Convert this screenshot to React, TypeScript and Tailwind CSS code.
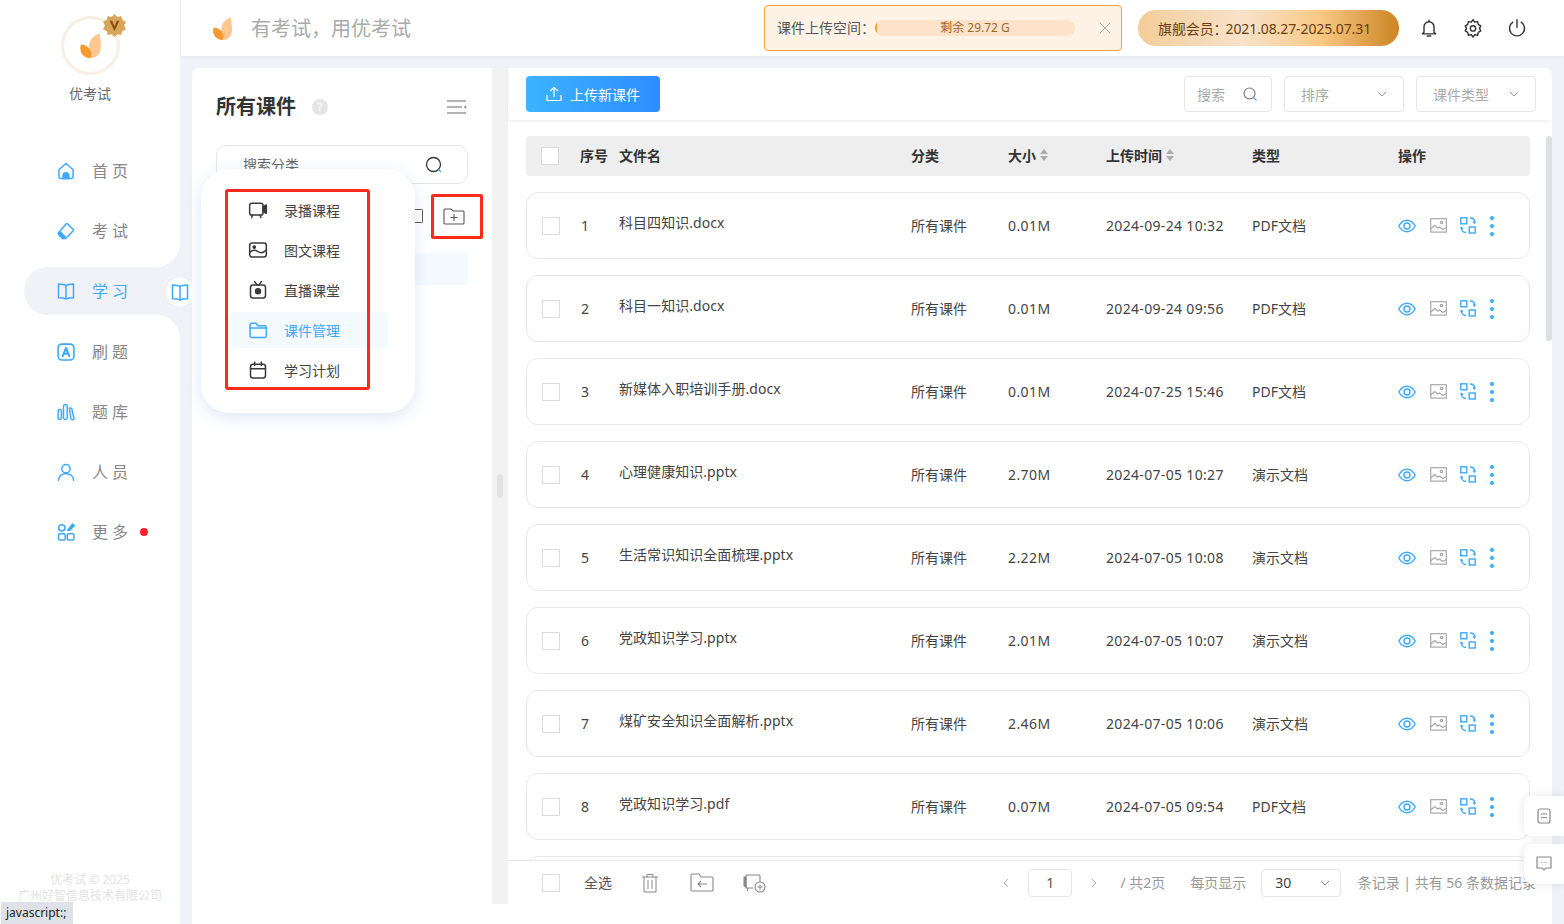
import React from 'react';

const B = '#3ca9ff';
const Leaf = ({ className }: { className?: string }) => (
  <svg viewBox="0 0 20 24" className={className}>
    <path d="M18.5 .5C19.500 4 20 8 20 13C20 19.500 16.500 24 11 24C9 24 7.500 23.500 6.500 22.500C9 20 8 13 9.500 8.500C11 4.500 14.500 1.500 18.500 .5Z" fill="#fdc78f" />
    <path d="M.8 11C5 11 9.500 14 10.800 19C11.200 21 10.800 23 9.500 24C5 24 1 21 .3 16C.1 14 .3 12.500 .8 11Z" fill="#f7992e" />
  </svg>
);

const S = ({ children, size = 20, color = B, w = 1.6, className }: any) => (
  <svg width={size} height={size} viewBox="0 0 24 24" fill="none" stroke={color} strokeWidth={w} strokeLinecap="round" strokeLinejoin="round" className={className}>
    {children}
  </svg>
);

const IHome = () => <S w={1.8}><path d="M3.500 10.500L12 3l8.500 7.500V19a2 2 0 0 1-2 2h-13a2 2 0 0 1-2-2z" /><path d="M8.500 21v-3.500a3.500 3.500 0 0 1 7 0V21z" fill={B} /></S>;
const IEraser = () => <S w={1.8}><path d="M14 3.500l6.500 6.500a1.500 1.500 0 0 1 0 2L11.500 21H7.500L3 16a1.500 1.500 0 0 1 0-2l9-10.500a1.400 1.400 0 0 1 2 0z" /><path d="M3 15l6 6 2-2-6-6z" fill={B} /></S>;
const IBook = ({ size = 20 }: any) => <S size={size} w={1.8}><path d="M12 5.500C10 4 7 3.500 3 3.500V20c4 0 7 .5 9 1.500 2-1 5-1.500 9-1.500V3.500c-4 0-7 .5-9 2z" /><path d="M12 5.500v16" /></S>;
const IA = () => <S w={1.9}><rect x="2.500" y="2.500" width="19" height="19" rx="4.500" /><path d="M8 17l4-10 4 10M9.300 14h5.400" strokeWidth="2.400" /></S>;
const IBars = () => <S w={1.8}><rect x="2.500" y="9" width="4" height="12" rx="2" /><rect x="9" y="3" width="4.500" height="18" rx="2" /><path d="M16 7.500c2.500-1 3 0 3.500 3L21.500 19.500c.3 2-3 2.500-3.500.5z" /></S>;
const IUser = () => <S w={1.8}><circle cx="12" cy="8" r="5" /><path d="M3 22c0-5 4-8 9-8s9 3 9 8" /></S>;
const IMore = () => <S w={1.8}><circle cx="7" cy="7" r="3.800" /><rect x="3" y="14" width="8" height="7.500" rx="1.500" /><rect x="13.500" y="14" width="8" height="7.500" rx="1.500" /><path d="M14 10l6-7.500 2 2L16 10z" fill={B} /></S>;

const dk = '#3a3a3a';
const IVideo = () => <S color={dk} w={1.8}><rect x="2" y="4" width="16" height="14" rx="2.500" /><path d="M18 8l4-2v10l-4-2z" fill={dk} /><path d="M5.500 18L4.500 21M14.500 18l1 3" /></S>;
const IPic = () => <S color={dk} w={1.8}><rect x="2" y="3.500" width="20" height="17" rx="3" /><circle cx="7.500" cy="8.500" r="1.400" fill={dk} /><path d="M2 15c4-4 7-3 10-1s6 2 10-2" /></S>;
const ITv = () => <S color={dk} w={1.8}><rect x="3" y="6" width="18" height="15.500" rx="3" /><path d="M8 2l3 4M16 2l-3 4" /><circle cx="12" cy="13.500" r="3" fill={dk} /></S>;
const IFolder = () => <S w={1.8}><path d="M2.500 19V5.500a1.500 1.500 0 0 1 1.500-1.500h5.500l2.500 3h8a2 2 0 0 1 2 2V19a2 2 0 0 1-2 2H4.500a2 2 0 0 1-2-2z" /><path d="M2.500 9.500h19" /></S>;
const ICal = () => <S color={dk} w={1.8}><rect x="3" y="5" width="18" height="16.500" rx="3" /><path d="M3 10.500h18M8 2.500v4M16 2.500v4" /></S>;

const Check = ({ className }: { className?: string }) => <div className={`w-[18px] h-[18px] border border-[#dcdcdc] bg-white ${className ?? ''}`} />;

const Eye = () => <svg width="18" height="14" viewBox="0 0 18 14" fill="none" stroke={B} strokeWidth="1.400"><path d="M.8 7C3 3 6 1.200 9 1.200S15 3 17.200 7C15 11 12 12.800 9 12.800S3 11 .8 7z" /><circle cx="9" cy="7" r="3" /></svg>;
const Img = () => <svg width="17" height="15" viewBox="0 0 17 15" fill="none" stroke="#a8a8a8" strokeWidth="1.200"><rect x=".7" y=".7" width="15.600" height="13.400" /><circle cx="11.500" cy="4.500" r="1.200" /><path d="M.7 11l4-3.500 3 2.500 2-1 3 2.500 3.600-2" /></svg>;
const Conv = () => <svg width="16" height="17" viewBox="0 0 16 17" fill="none" stroke={B} strokeWidth="1.400"><rect x=".8" y=".8" width="6" height="6" /><rect x="9.200" y="10" width="6" height="6" /><path d="M10 1c3 0 5 2 5 5M13.200 4.500L15 6.400M1 10c0 3 2 5.500 5 5.500M2.800 12L1 10" /></svg>;
const Dots = () => <div className="flex flex-col gap-[4px] items-center w-[4px]">{[0,1,2].map(i => <div key={i} className="w-[4px] h-[4px] rounded-full bg-[#3ca9ff]" />)}</div>;

const Sort = () => <span className="inline-flex flex-col gap-[2px] ml-[4px]"><span className="w-0 h-0 border-x-[4px] border-x-transparent border-b-[5px] border-b-[#aaa]" /><span className="w-0 h-0 border-x-[4px] border-x-transparent border-t-[5px] border-t-[#aaa]" /></span>;

const nums = 'font-["Noto_Sans","Noto_Sans_CJK_SC",sans-serif]';
const headCols = 'grid grid-cols-[54px_39px_292px_97px_98px_146px_146px_1fr] items-center';
const rowCols = 'grid grid-cols-[54px_38px_292px_97px_98px_146px_147px_1fr] items-center';

const rows = [
  ['1', '科目四知识.docx', '0.01M', '2024-09-24 10:32', 'PDF文档'],
  ['2', '科目一知识.docx', '0.01M', '2024-09-24 09:56', 'PDF文档'],
  ['3', '新媒体入职培训手册.docx', '0.01M', '2024-07-25 15:46', 'PDF文档'],
  ['4', '心理健康知识.pptx', '2.70M', '2024-07-05 10:27', '演示文档'],
  ['5', '生活常识知识全面梳理.pptx', '2.22M', '2024-07-05 10:08', '演示文档'],
  ['6', '党政知识学习.pptx', '2.01M', '2024-07-05 10:07', '演示文档'],
  ['7', '煤矿安全知识全面解析.pptx', '2.46M', '2024-07-05 10:06', '演示文档'],
  ['8', '党政知识学习.pdf', '0.07M', '2024-07-05 09:54', 'PDF文档'],
];

const Nav = ({ icon, label, dot }: any) => (
  <div className="h-[60px] flex items-center pl-[56px]">
    {icon}
    <span className="ml-[16px] text-[16px] tracking-[4px] text-[#888]">{label}</span>
    {dot && <span className="ml-[8px] w-[8px] h-[8px] rounded-full bg-[#ff1f2d]" />}
  </div>
);

const MenuItem = ({ icon, label, active }: any) => (
  <div className={`h-[36px] mb-[4px] flex items-center pl-[19px] rounded ${active ? 'bg-[#f5faff]' : ''}`}>
    {icon}
    <span className={`ml-[16px] text-[14px] ${active ? 'text-[#3ca9ff]' : 'text-[#444]'}`}>{label}</span>
  </div>
);

const Select = ({ label, w }: any) => (
  <div className={`h-[36px] ${w} border border-[#e6e6e6] rounded flex items-center justify-between px-[16px] text-[14px] text-[#aaa]`}>
    <span>{label}</span>
    <svg width="10" height="10" viewBox="0 0 10 10" fill="none" stroke="#999" strokeWidth="1"><path d="M1 3l4 4 4-4" /></svg>
  </div>
);

export default function App() {
  return (
    <div className={`relative w-[1564px] h-[924px] overflow-hidden flex bg-[#f0f2f7] ${nums}`}>
      {/* sidebar */}
      <aside className="relative z-20 w-[180px] shrink-0 flex flex-col">
        <div className="h-[267px] bg-white rounded-br-[24px] flex flex-col">
          <div className="h-[141px] flex flex-col items-center pt-[16px]">
            <div className="relative w-[59px] h-[59px] rounded-full border-[3px] border-[#f7efe4] flex items-center justify-center">
              <Leaf className="w-[21px] h-[25px]" />
              <svg viewBox="0 0 24 24" className="absolute -top-[5px] -right-[9px] w-[23px] h-[23px]">
                <path d="M12 0l3 3 4-1 1 4 4 2-2 4 2 4-4 2-1 4-4-1-3 3-3-3-4 1-1-4-4-2 2-4-2-4 4-2 1-4 4 1z" fill="#d9a55a" />
                <path d="M7 7l5 11 5-11h-2.500L12 13 9.500 7z" fill="#8a4f0c" />
              </svg>
            </div>
            <span className="mt-[8px] text-[14px] text-[#666]">优考试</span>
          </div>
          <Nav icon={<IHome />} label="首页" />
          <Nav icon={<IEraser />} label="考试" />
        </div>
        <div className="h-[48px] bg-white">
          <div className="ml-[24px] h-full bg-[#f0f2f7] rounded-l-[24px] flex items-center pl-[32px]">
            <IBook />
            <span className="ml-[16px] text-[16px] tracking-[4px] text-[#3ca9ff]">学习</span>
          </div>
        </div>
        <div className="flex-1 bg-white rounded-tr-[24px] pt-[7px] flex flex-col">
          <Nav icon={<IA />} label="刷题" />
          <Nav icon={<IBars />} label="题库" />
          <Nav icon={<IUser />} label="人员" />
          <Nav icon={<IMore />} label="更多" dot />
          <div className="mt-auto pb-[20px] text-center text-[12px] leading-[16px] text-[#e2e2e2]">
            <div>优考试 © 2025</div>
            <div>广州好智信息技术有限公司</div>
          </div>
        </div>
        <div className="absolute left-[166px] top-[278px] w-[28px] h-[28px] rounded-full bg-white flex items-center justify-center">
          <IBook size={20} />
        </div>
      </aside>

      {/* right */}
      <div className="flex-1 min-w-0 flex flex-col">
        <header className="relative z-10 ml-px h-[56px] bg-white shadow-[0_1px_4px_rgba(0,0,0,0.06)] flex items-center">
          <Leaf className="ml-[32px] w-[19px] h-[23px]" />
          <span className="ml-[19px] pt-[2px] text-[20px] text-[#aaa]">有考试，用优考试</span>
          <div className="ml-auto mr-[16px] w-[358px] h-[46px] rounded border border-[#f9a03f] bg-[#fef2e6] flex items-center pl-[12px] pr-[10px]">
            <span className="pb-[2px] text-[14px] text-[#555] whitespace-nowrap">课件上传空间：</span>
            <div className="w-[200px] h-[16px] rounded-full bg-[#fee3ca] relative overflow-hidden flex items-center justify-center text-[12px] text-[#a0662a]">
              <span className="absolute left-0 top-0 bottom-0 w-[2px] bg-[#f79a3a]" />
              剩余 29.72 G
            </div>
            <svg className="ml-auto" width="12" height="12" viewBox="0 0 12 12" stroke="#aaa" strokeWidth="1"><path d="M1 1l10 10M11 1L1 11" /></svg>
          </div>
          <div className="w-[261px] h-[36px] rounded-full bg-[linear-gradient(90deg,#f3cd98_0%,#f8e2ca_40%,#f9c985_70%,#cd8424_100%)] flex items-center pl-[20px] text-[14px] tracking-[-0.1px] text-[#6b3d10]">
            <span>旗舰会员：</span><span className="-ml-[2px]">2021.08.27-2025.07.31</span>
          </div>
          <div className="ml-[20px] mr-[37px] flex items-center gap-[24px]">
            <S color="#333" w={1.7}><path d="M6 17V10.500a6 6 0 0 1 12 0V17l2 2H4z" /><path d="M10 21.500h4M12 2.500v2" /></S>
            <S color="#333" w={1.7}><path d="M12 2l2 3 3.500-.7.800 3.400 3 1.800-1.500 3 1.500 3-3 1.800-.8 3.400-3.500-.7-2 3-2-3-3.500.7-.8-3.400-3-1.800 1.500-3-1.500-3 3-1.800.8-3.400L10 5z" /><circle cx="12" cy="12.500" r="3.200" /></S>
            <S color="#333" w={1.7}><path d="M7 5a9 9 0 1 0 10 0M12 2v9" /></S>
          </div>
        </header>

        <div className="flex-1 min-h-0 pt-[12px] pl-[12px] pr-[12px]">
          <div className="h-full bg-white rounded-t-lg flex overflow-hidden">
            {/* category panel */}
            <div className="w-[300px] shrink-0 px-[24px] pt-[26px]">
              <div className="flex items-center h-[26px]">
                <span className="text-[20px] font-bold text-[#333]">所有课件</span>
                <span className="ml-[16px] w-[16px] h-[16px] rounded-full bg-[#e5e5e5] text-white text-[11px] flex items-center justify-center">?</span>
                <svg className="ml-auto mr-[2px]" width="19" height="14" viewBox="0 0 19 14" stroke="#999" strokeWidth="1.500"><path d="M0 1h19M0 7h15M0 13h19" /><path d="M19 5l-2 2 2 2" fill="#999" strokeWidth="0.500" /></svg>
              </div>
              <div className="mt-[25px] h-[39px] rounded-[10px] border border-[#e6e6e6] flex items-center pl-[26px] pr-[24px] text-[14px] text-[#666]">
                <span>搜索分类</span>
                <svg className="ml-auto" width="18" height="18" viewBox="0 0 18 18" fill="none" stroke="#333" strokeWidth="1.300"><circle cx="8.500" cy="8.500" r="7" /><path d="M13.500 13.500l2.500 2.500" stroke="#3ca9ff" /></svg>
              </div>
              <div className="h-[69px] flex items-center justify-end">
                <div className="w-[8px] h-[14px] mr-[8px] mb-[6px] border border-[#555] rounded-r-[2px] border-l-0" />
                <div className="w-[52px] h-[45px] -mr-[15px] mb-[4px] border-[3px] border-[#ff2a1a] rounded-[2px] flex items-center justify-center pr-[6px]">
                  <svg width="22" height="17" viewBox="0 0 22 17" fill="none" stroke="#555" strokeWidth="1.100"><path d="M1 15V2a1 1 0 0 1 1-1h6l2 2h10a1 1 0 0 1 1 1v11a1 1 0 0 1-1 1H2a1 1 0 0 1-1-1z" /><path d="M11 6v7M7.500 9.500h7" /></svg>
                </div>
              </div>
              <div className="h-[32px] bg-[#f5faff]" />
            </div>

            {/* splitter */}
            <div className="w-[16px] h-[836px] shrink-0 bg-[#f2f2f2] flex items-center justify-center">
              <div className="w-[6px] h-[24px] bg-[#e2e2e2] rounded-sm" />
            </div>

            {/* main */}
            <div className="flex-1 min-w-0 h-[836px] flex flex-col relative">
              <div className="h-[52px] shrink-0 shadow-[0_1px_3px_rgba(0,0,0,0.08)] flex items-center pl-[18px] pr-[16px]">
                <div className="h-[36px] w-[134px] rounded bg-[linear-gradient(90deg,#3cb4ff,#2e8cff)] flex items-center justify-center text-white text-[14px]">
                  <svg width="16" height="16" viewBox="0 0 16 16" fill="none" stroke="#fff" strokeWidth="1.200"><path d="M1 9v5.500h14V9M8 11V1.500M4 5l4-3.500L12 5" /></svg>
                  <span className="ml-[8px]">上传新课件</span>
                </div>
                <div className="ml-auto h-[36px] w-[88px] border border-[#e6e6e6] rounded flex items-center justify-between pl-[12px] pr-[14px] text-[14px] text-[#aaa]">
                  <span>搜索</span>
                  <svg width="14" height="14" viewBox="0 0 14 14" fill="none" stroke="#777" strokeWidth="1.100"><circle cx="6.500" cy="6.500" r="5.500" /><path d="M10.500 10.500l3 3" stroke="#3ca9ff" /></svg>
                </div>
                <div className="ml-[12px]"><Select label="排序" w="w-[120px]" /></div>
                <div className="ml-[12px]"><Select label="课件类型" w="w-[120px]" /></div>
              </div>

              <div className="flex-1 min-h-0 relative pl-[18px] pr-[22px] pt-[16px] overflow-hidden">
                <div className={`${headCols} h-[40px] bg-[#eeeeee] rounded text-[14px] font-bold text-[#333] pb-[2px]`}>
                  <div className="pl-[15px] pt-[2px]"><Check /></div>
                  <div className="col-start-2">序号</div>
                  <div>文件名</div>
                  <div>分类</div>
                  <div className="flex items-center">大小<Sort /></div>
                  <div className="flex items-center">上传时间<Sort /></div>
                  <div>类型</div>
                  <div>操作</div>
                </div>
                {rows.map(r => (
                  <div key={r[0]} className={`${rowCols} h-[67px] mt-[16px] border border-[#e8e8e8] rounded-[12px] text-[14px] text-[#444]`}>
                    <div className="pl-[15px]"><Check /></div>
                    <div className="col-start-2">{r[0]}</div>
                    <div className="pb-[6px] tracking-[0.05px]">{r[1]}</div>
                    <div>所有课件</div>
                    <div className="tracking-[0.4px]">{r[2]}</div>
                    <div className="tracking-[0.33px]">{r[3]}</div>
                    <div>{r[4]}</div>
                    <div className="flex items-center -ml-[1px]">
                      <Eye />
                      <span className="ml-[14px]"><Img /></span>
                      <span className="ml-[13px]"><Conv /></span>
                      <span className="ml-[14px]"><Dots /></span>
                    </div>
                  </div>
                ))}
                <div className="h-[67px] mt-[16px] border border-[#e8e8e8] rounded-[12px]" />
                <div className="absolute right-0 top-[16px] w-[6px] h-[205px] rounded bg-[#dfe0e4]" />
              </div>

              {/* footer */}
              <div className="h-[44px] shrink-0 border-t border-[#e8e8e8] flex items-center pl-[34px] pr-[16px] text-[14px] bg-white">
                <Check />
                <span className="ml-[24px] text-[#555]">全选</span>
                <svg className="ml-[28px]" width="20" height="20" viewBox="0 0 20 20" fill="none" stroke="#888" strokeWidth="1"><path d="M2 4h16M7 4V1.500h6V4M4 4v15h12V4M8 7v9M12 7v9" /></svg>
                <svg className="ml-[30px]" width="24" height="20" viewBox="0 0 24 20" fill="none" stroke="#888" strokeWidth="1.100"><path d="M1 17V2a1 1 0 0 1 1-1h7l2 3h11a1 1 0 0 1 1 1v12a1 1 0 0 1-1 1H2a1 1 0 0 1-1-1zM17 11H8M11 8l-3 3 3 3" /></svg>
                <svg className="ml-[29px]" width="24" height="20" viewBox="0 0 24 20" fill="none" stroke="#888" strokeWidth="1.100"><path d="M3 2h13a1 1 0 0 1 1 1v6M3 2v13h7" /><path d="M1 4v9l2 1V4z" fill="#888" /><path d="M5 15l-1 3" /><circle cx="17" cy="14" r="5" /><path d="M17 11.500v5M14.500 14h5" /></svg>
                <div className="ml-auto flex items-center w-[535px] overflow-hidden text-[#999] whitespace-nowrap shrink-0">
                  <svg className="ml-[1px]" width="8" height="10" viewBox="0 0 8 10" fill="none" stroke="#aaa"><path d="M6 1L2 5l4 4" /></svg>
                  <div className="ml-[18px] w-[45px] h-[28px] border border-[#e6e6e6] rounded flex items-center justify-center text-[#555]">1</div>
                  <svg className="ml-[18px]" width="8" height="10" viewBox="0 0 8 10" fill="none" stroke="#aaa"><path d="M2 1l4 4-4 4" /></svg>
                  <span className="ml-[22px]">/ 共2页</span>
                  <span className="ml-[25px]">每页显示</span>
                  <div className="ml-[15px] w-[80px] h-[28px] border border-[#e6e6e6] rounded flex items-center justify-between pl-[13px] pr-[10px] text-[#444]">
                    <span>30</span>
                    <svg width="10" height="10" viewBox="0 0 10 10" fill="none" stroke="#888"><path d="M1 3l4 4 4-4" /></svg>
                  </div>
                  <span className="ml-[17px]">条记录 | 共有 56 条数据记录</span>
                </div>
              </div>
            </div>
          </div>
        </div>
      </div>

      {/* add menu popover */}
      <div className="absolute z-30 left-[201px] top-[169px] w-[214px] h-[244px] rounded-[28px] bg-white shadow-[0_4px_16px_rgba(120,160,210,0.25)] pt-[23px] pl-[28px] pr-[27px]">
        <MenuItem icon={<IVideo />} label="录播课程" />
        <MenuItem icon={<IPic />} label="图文课程" />
        <MenuItem icon={<ITv />} label="直播课堂" />
        <MenuItem icon={<IFolder />} label="课件管理" active />
        <MenuItem icon={<ICal />} label="学习计划" />
        <div className="absolute left-[24px] top-[20px] w-[145px] h-[201px] border-[3px] border-[#ff2a1a] rounded-[3px]" />
      </div>

      {/* float buttons */}
      <div className="absolute z-30 right-0 top-[796px] w-[40px] h-[40px] bg-white rounded-l-lg shadow-[0_0_8px_rgba(0,0,0,0.1)] flex items-center justify-center">
        <svg width="14" height="16" viewBox="0 0 14 16" fill="none" stroke="#888" strokeWidth="1.200"><rect x="1" y="1" width="12" height="14" rx="2" /><path d="M4 6h6M4 9.500h6" /></svg>
      </div>
      <div className="absolute z-30 right-0 top-[844px] w-[40px] h-[40px] bg-white rounded-l-lg shadow-[0_0_8px_rgba(0,0,0,0.1)] flex items-center justify-center">
        <svg width="16" height="16" viewBox="0 0 16 16" fill="none" stroke="#888" strokeWidth="1.200"><path d="M1.500 1h13a.5.5 0 0 1 .5.500v10.500h-5l-2 2-2-2H1V1.500a.5.5 0 0 1 .5-.5z" /><path d="M5 6.500h.8M7.800 6.500h.8M10.500 6.500h.8" /></svg>
      </div>

      {/* status tooltip */}
      <div className="absolute z-40 left-[1px] bottom-0 h-[22px] w-[72px] bg-[#dee1e6] text-[12px] text-[#222] flex items-center pl-[5px]">javascript:;</div>
    </div>
  );
}
